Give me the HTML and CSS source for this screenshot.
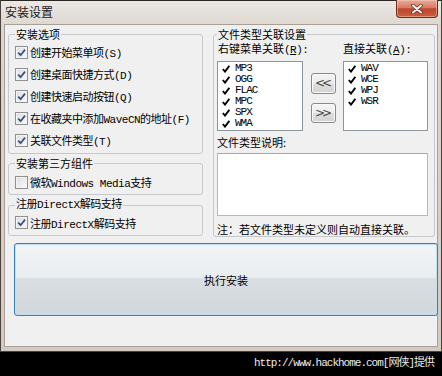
FILE: index.html
```html
<!DOCTYPE html>
<html lang="zh-CN">
<head>
    <meta charset="UTF-8">
    <title>安装设置</title>
    <link rel="stylesheet" href="styles.css">
</head>
<body>
    <div class="window">
        <div class="titlebar">
            <span class="title">安装设置</span>
            <div class="close-btn">
                <svg width="12" height="10" viewBox="0 0 12 10">
                    <path d="M2 1.5 L10 8.5 M10 1.5 L2 8.5" stroke="#6a2a1c" stroke-width="3.6" stroke-linecap="round"/>
                    <path d="M2 1.5 L10 8.5 M10 1.5 L2 8.5" stroke="#fff" stroke-width="2" stroke-linecap="round"/>
                </svg>
            </div>
        </div>

        <div class="client">
            <div class="top">
                <div class="left-col">
                    <fieldset class="group opts">
                        <legend>安装选项</legend>
                        <div class="check"><span class="cb"><svg viewBox="0 0 11 11"><path d="M2.2 5.6 L4.6 8.2 L9 2.6" /></svg></span>创建开始菜单项(S)</div>
                        <div class="check"><span class="cb"><svg viewBox="0 0 11 11"><path d="M2.2 5.6 L4.6 8.2 L9 2.6" /></svg></span>创建桌面快捷方式(D)</div>
                        <div class="check"><span class="cb"><svg viewBox="0 0 11 11"><path d="M2.2 5.6 L4.6 8.2 L9 2.6" /></svg></span>创建快速启动按钮(Q)</div>
                        <div class="check"><span class="cb"><svg viewBox="0 0 11 11"><path d="M2.2 5.6 L4.6 8.2 L9 2.6" /></svg></span>在收藏夹中添加WaveCN的地址(F)</div>
                        <div class="check"><span class="cb"><svg viewBox="0 0 11 11"><path d="M2.2 5.6 L4.6 8.2 L9 2.6" /></svg></span>关联文件类型(T)</div>
                    </fieldset>

                    <fieldset class="group third">
                        <legend>安装第三方组件</legend>
                        <div class="check"><span class="cb"></span>微软Windows Media支持</div>
                    </fieldset>

                    <fieldset class="group directx">
                        <legend>注册DirectX解码支持</legend>
                        <div class="check"><span class="cb"><svg viewBox="0 0 11 11"><path d="M2.2 5.6 L4.6 8.2 L9 2.6" /></svg></span>注册DirectX解码支持</div>
                    </fieldset>
                </div>

                <fieldset class="group assoc">
                    <legend>文件类型关联设置</legend>
                    <div class="list-labels">
                        <span class="list-label first">右键菜单关联<span class="key">(<u>R</u>):</span></span>
                        <span class="list-label">直接关联<span class="key">(<u>A</u>):</span></span>
                    </div>
                    <div class="lists">
                        <div class="listbox left-list">
                            <div class="item"><svg class="tick" viewBox="0 0 8 8"><path d="M0.8 4 L3 6.6 L7.4 0.8"/></svg>MP3</div>
                            <div class="item"><svg class="tick" viewBox="0 0 8 8"><path d="M0.8 4 L3 6.6 L7.4 0.8"/></svg>OGG</div>
                            <div class="item"><svg class="tick" viewBox="0 0 8 8"><path d="M0.8 4 L3 6.6 L7.4 0.8"/></svg>FLAC</div>
                            <div class="item"><svg class="tick" viewBox="0 0 8 8"><path d="M0.8 4 L3 6.6 L7.4 0.8"/></svg>MPC</div>
                            <div class="item"><svg class="tick" viewBox="0 0 8 8"><path d="M0.8 4 L3 6.6 L7.4 0.8"/></svg>SPX</div>
                            <div class="item"><svg class="tick" viewBox="0 0 8 8"><path d="M0.8 4 L3 6.6 L7.4 0.8"/></svg>WMA</div>
                        </div>

                        <div class="move-btns">
                            <button class="small-btn">&lt;&lt;</button>
                            <button class="small-btn down">&gt;&gt;</button>
                        </div>

                        <div class="listbox right-list">
                            <div class="item"><svg class="tick" viewBox="0 0 8 8"><path d="M0.8 4 L3 6.6 L7.4 0.8"/></svg>WAV</div>
                            <div class="item"><svg class="tick" viewBox="0 0 8 8"><path d="M0.8 4 L3 6.6 L7.4 0.8"/></svg>WCE</div>
                            <div class="item"><svg class="tick" viewBox="0 0 8 8"><path d="M0.8 4 L3 6.6 L7.4 0.8"/></svg>WPJ</div>
                            <div class="item"><svg class="tick" viewBox="0 0 8 8"><path d="M0.8 4 L3 6.6 L7.4 0.8"/></svg>WSR</div>
                        </div>
                    </div>

                    <div class="desc-label">文件类型说明:</div>
                    <div class="desc-box"></div>
                    <div class="note">注：若文件类型未定义则自动直接关联。</div>
                </fieldset>
            </div>

            <button class="install-btn">执行安装</button>
        </div>
    </div>

    <div class="footer">http://www.hackhome.com[网侠]提供</div>
</body>
</html>
```

FILE: styles.css
```css
* {
    box-sizing: border-box;
}
body {
    margin: 0;
    width: 442px;
    height: 376px;
    overflow: hidden;
    background: #000;
    font-family: "Liberation Mono", "Noto Sans CJK SC", monospace;
    font-size: 11px;
    color: #000;
}
.window {
    width: 442px;
    height: 352px;
    border: 1px solid #4a423c;
    border-top-color: #2b2622;
    padding: 0 3px 4px;
    background: linear-gradient(#ebe8e5, #ddd6cf 26px, #d3cac1);
    display: flex;
    flex-direction: column;
}
.titlebar {
    height: 23px;
    flex: none;
    display: flex;
    justify-content: space-between;
    align-items: flex-start;
}
.title {
    font-family: "Noto Sans CJK SC", sans-serif;
    font-size: 12px;
    line-height: 21px;
    padding-left: 1px;
    color: #1a1a1a;
}
.close-btn {
    width: 42px;
    height: 18px;
    margin-top: -1px;
    border: 1px solid #6b2e20;
    border-top: none;
    border-radius: 0 0 4px 4px;
    background: linear-gradient(#e8ab99, #d77c63 45%, #c0452a 52%, #cb5f42);
    box-shadow: inset 0 0 0 1px rgba(255, 215, 200, 0.45);
    display: flex;
    align-items: center;
    justify-content: center;
}
.client {
    height: 323px;
    flex: none;
    border: 1px solid #a89f96;
    background: #f0f0f0;
    padding: 2px 2px 0 3px;
}
.top {
    display: flex;
    gap: 10px;
}
.left-col {
    width: 195px;
    flex: none;
    display: flex;
    flex-direction: column;
}
.group {
    margin: 0;
    border: 1px solid #c5c9cd;
    border-radius: 3px;
    min-width: 0;
}
.group legend {
    padding: 0 1px;
    line-height: 14px;
    font-size: 11px;
    font-family: "Noto Sans CJK SC", sans-serif;
}
.opts {
    padding: 0 4px 2px 6px;
}
.third {
    margin-top: 2px;
    padding: 1px 4px 1px 6px;
}
.directx {
    margin-top: 3px;
    padding: 0 4px 2px 6px;
}
.directx legend {
    font-family: "Liberation Mono", "Noto Sans CJK SC", monospace;
    letter-spacing: -0.5px;
}
.check {
    display: flex;
    align-items: center;
    gap: 2px;
    height: 22px;
    white-space: nowrap;
    letter-spacing: -0.5px;
}
.directx .check {
    height: 21px;
}
.cb {
    width: 13px;
    height: 13px;
    flex: none;
    border: 1px solid #8f8f8f;
    background: linear-gradient(135deg, #dcdcdc, #fbfbfb);
    box-shadow: inset 0 0 0 1px #f4f4f4;
    display: flex;
}
.cb svg {
    width: 11px;
    height: 11px;
    fill: none;
    stroke: #3a4f8c;
    stroke-width: 1.8;
}
.assoc {
    flex: 1;
    height: 210px;
    padding: 0 6px 1px 3px;
}
.list-labels {
    display: flex;
    margin-bottom: 4px;
    line-height: 14px;
    white-space: nowrap;
}
.list-label {
    font-family: "Noto Sans CJK SC", sans-serif;
}
.list-label.first {
    width: 126px;
    flex: none;
    padding-left: 1px;
}
.list-label .key {
    font-family: "Liberation Mono", monospace;
    letter-spacing: -0.5px;
}
.lists {
    display: flex;
}
.listbox {
    height: 70px;
    border: 1px solid #8e949b;
    background: #fff;
    padding: 1px 0 0 4px;
}
.left-list {
    width: 86px;
}
.right-list {
    width: 85px;
}
.item {
    display: flex;
    align-items: center;
    gap: 5px;
    height: 11px;
    line-height: 11px;
    letter-spacing: -1px;
}
.tick {
    width: 8px;
    height: 8px;
    flex: none;
    fill: none;
    stroke: #000;
    stroke-width: 1.9;
}
.move-btns {
    width: 25px;
    margin: 12px 7px 0 8px;
    display: flex;
    flex-direction: column;
    gap: 9px;
}
.small-btn {
    height: 21px;
    padding: 0 0 1px;
    border: 1px solid #8a8a8a;
    border-radius: 3px;
    background: linear-gradient(#f4f4f4, #ececec 48%, #dedede 52%, #d2d2d2);
    box-shadow: inset 0 0 0 1px #fbfbfb;
    font-family: "DejaVu Sans", sans-serif;
    font-size: 12px;
    letter-spacing: -3px;
    text-indent: -3px;
    color: #444;
}
.small-btn.down {
    height: 20px;
}
.desc-label {
    margin-top: 4px;
    line-height: 14px;
    font-family: "Noto Sans CJK SC", sans-serif;
}
.desc-box {
    margin-top: 4px;
    height: 63px;
    border: 1px solid #b5bac1;
    border-top-color: #a2a8b0;
    background: #fff;
}
.note {
    margin-top: 6px;
    line-height: 14px;
    white-space: nowrap;
    font-family: "Noto Sans CJK SC", sans-serif;
}
.install-btn {
    display: block;
    margin: 6px 0 0 6px;
    width: 424px;
    height: 73px;
    border: 1px solid #3c7fb1;
    border-radius: 3px;
    background: linear-gradient(#f2f4f6, #eaedf0 47%, #d9dee2 49%, #d2d7db);
    box-shadow: inset 0 0 0 1px #bfe0f0;
    font-family: "Noto Sans CJK SC", sans-serif;
    font-size: 11px;
    color: #000;
}
.footer {
    height: 24px;
    padding: 1px 8px 0 0;
    text-align: right;
    line-height: 20px;
    color: #ececec;
    letter-spacing: -1px;
    white-space: nowrap;
}
```
